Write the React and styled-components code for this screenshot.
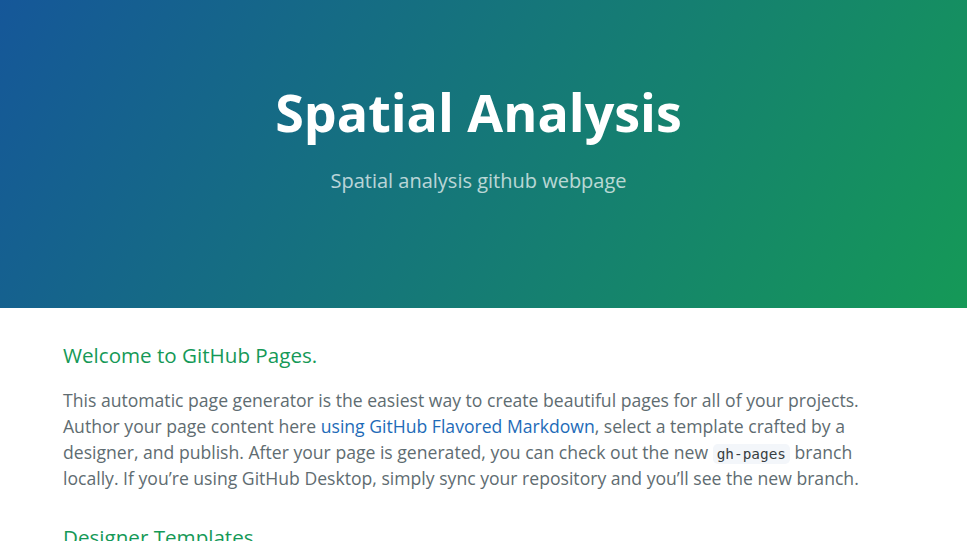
import React from "react";
import styled, { createGlobalStyle } from "styled-components";

const GlobalStyle = createGlobalStyle`
  html, body {
    margin: 0;
    padding: 0;
  }
  body {
    font-family: "Open Sans", "Helvetica Neue", Helvetica, Arial, sans-serif;
    font-size: 16px;
    line-height: 1.5;
    color: #606c71;
    background: #fff;
  }
`;

const PageHeader = styled.section`
  height: 308px;
  box-sizing: border-box;
  padding: 73px 106px 0 96px;
  color: #fff;
  text-align: center;
  background-color: #159957;
  background-image: linear-gradient(120deg, #155799, #159957);
`;

const ProjectName = styled.h1`
  margin: 0 0 15px;
  font-size: 52px;
  font-weight: 700;
  line-height: 1.5;
`;

const Tagline = styled.h2`
  margin: 0 0 32px;
  font-size: 20px;
  font-weight: 400;
  line-height: 1.5;
  opacity: 0.7;
`;

const MainContent = styled.section`
  max-width: 1024px;
  padding: 32px 64px 32px 63px;
  font-size: 17.6px;
  word-wrap: break-word;
`;

const Heading = styled.h2`
  margin: ${(p) => (p.$first ? "0" : "31px")} 0 16.5px;
  font-size: 20.6px;
  font-weight: 400;
  line-height: 1.5;
  color: #159957;
`;

const Para = styled.p`
  margin: 0 0 16px;
  line-height: 26px;
`;

const Link = styled.a`
  color: #1e6bb8;
  text-decoration: none;
`;

const Code = styled.code`
  padding: 2px 4px;
  font-family: "DejaVu Sans Mono", "Liberation Mono", monospace;
  font-size: 14.4px;
  line-height: 1;
  color: #383e41;
  background-color: #f3f6fa;
  border-radius: 4.8px;
`;

export default function App() {
  return (
    <>
      <GlobalStyle />
      <PageHeader>
        <ProjectName>Spatial Analysis</ProjectName>
        <Tagline>Spatial analysis github webpage</Tagline>
      </PageHeader>
      <MainContent>
        <Heading $first>Welcome to GitHub Pages.</Heading>
        <Para>
          This automatic page generator is the easiest way to create beautiful pages for all of
          your projects. Author your page content here{" "}
          <Link href="#">using GitHub Flavored Markdown</Link>, select a template crafted by a
          designer, and publish. After your page is generated, you can check out the new{" "}
          <Code>gh-pages</Code> branch locally. If you’re using GitHub Desktop, simply sync your
          repository and you’ll see the new branch.
        </Para>
        <Heading>Designer Templates</Heading>
        <Para>
          We’ve crafted some handsome templates for you to use. Go ahead and click 'Continue to
          layouts' to browse through them.
        </Para>
      </MainContent>
    </>
  );
}
